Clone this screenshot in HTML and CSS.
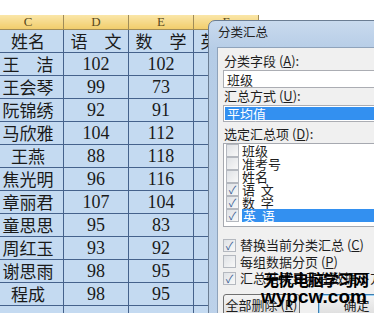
FILE: index.html
```html
<!DOCTYPE html>
<html>
<head>
    <meta charset="utf-8">
    <title>分类汇总</title>
    <link rel="stylesheet" href="styles.css">
</head>
<body>
    <div class="screen">
        <table class="sheet">
            <colgroup>
                <col class="col-c">
                <col class="col">
                <col class="col">
                <col class="col">
            </colgroup>
            <thead>
                <tr>
                    <td>C</td>
                    <td>D</td>
                    <td>E</td>
                    <td>F</td>
                </tr>
            </thead>
            <tbody>
                <tr><td class="name">姓名</td><td class="name">语　文</td><td class="name">数　学</td><td class="name">英　语</td></tr>
                <tr><td class="name">王　洁</td><td>102</td><td>102</td><td></td></tr>
                <tr><td class="name">王会琴</td><td>99</td><td>73</td><td></td></tr>
                <tr><td class="name">阮锦绣</td><td>92</td><td>91</td><td></td></tr>
                <tr><td class="name">马欣雅</td><td>104</td><td>112</td><td></td></tr>
                <tr><td class="name">王燕</td><td>88</td><td>118</td><td></td></tr>
                <tr><td class="name">焦光明</td><td>96</td><td>116</td><td></td></tr>
                <tr><td class="name">章丽君</td><td>107</td><td>104</td><td></td></tr>
                <tr><td class="name">童思思</td><td>95</td><td>83</td><td></td></tr>
                <tr><td class="name">周红玉</td><td>93</td><td>92</td><td></td></tr>
                <tr><td class="name">谢思雨</td><td>98</td><td>95</td><td></td></tr>
                <tr><td class="name">程成</td><td>98</td><td>95</td><td></td></tr>
                <tr><td></td><td></td><td></td><td></td></tr>
            </tbody>
        </table>

        <!-- dialog window over the sheet -->
        <div class="dialog">
            <div class="title">分类汇总</div>
            <div class="panel">
                <div class="lbl">分类字段 (<u>A</u>):</div>
                <div class="field">班级</div>
                <div class="lbl">汇总方式 (<u>U</u>):</div>
                <div class="field select"><span class="picked">平均值</span></div>
                <div class="lbl gap">选定汇总项 (<u>D</u>):</div>
                <div class="listbox">
                    <div class="item"><span class="box"></span><span>班级</span></div>
                    <div class="item"><span class="box"></span><span>准考号</span></div>
                    <div class="item"><span class="box"></span><span>姓名</span></div>
                    <div class="item"><span class="box on">✓</span><span>语&nbsp;&nbsp;文</span></div>
                    <div class="item"><span class="box on">✓</span><span>数&nbsp;&nbsp;学</span></div>
                    <div class="item"><span class="box on">✓</span><span class="sel">英&nbsp;&nbsp;语</span></div>
                </div>
                <div class="checks">
                    <div class="check"><span class="box on">✓</span><span>替换当前分类汇总 (<u>C</u>)</span></div>
                    <div class="check"><span class="box"></span><span>每组数据分页 (<u>P</u>)</span></div>
                    <div class="check"><span class="box on">✓</span><span>汇总结果显示在数据下方</span></div>
                </div>
                <div class="buttons">
                    <div class="btn">全部删除 (<u>R</u>)</div>
                    <div class="btn default">确定</div>
                </div>
            </div>
        </div>

        <div class="mark">
            <div class="mark-cn">无忧电脑学习网</div>
            <div class="mark-en">wypcw.com</div>
        </div>
    </div>
</body>
</html>
```

FILE: styles.css
```css
body {
    margin: 0;
    background: #ffffff;
}

.screen {
    position: relative;
    width: 374px;
    height: 313px;
    overflow: hidden;
    padding-top: 15px;
    box-sizing: border-box;
}

.sheet {
    border-collapse: collapse;
    table-layout: fixed;
    margin-left: -8px;
    width: 266px;
}
.col-c {
    width: 71px;
}
.col {
    width: 65px;
}
.sheet td {
    padding: 0;
    border: 1px solid #45628c;
    text-align: center;
    white-space: nowrap;
    overflow: hidden;
    color: #1a1a1a;
    background: #c4daf1;
    font-family: "Liberation Serif", serif;
    font-size: 18px;
    height: 22px;
    line-height: 22px;
}
.sheet td.name {
    font-family: "Noto Sans CJK SC", sans-serif;
    font-size: 17px;
}
.sheet thead td {
    height: 14px;
    line-height: 14px;
    font-size: 13px;
    color: #5a4a20;
    background: linear-gradient(#fae6a8, #f1cd6c);
    border-color: #a08c58;
    border-top: none;
}

.dialog {
    position: absolute;
    left: 208px;
    top: 20px;
    width: 190px;
    height: 310px;
    background: linear-gradient(#c9daee, #b5cce6 30px, #bdd2ea);
    border: 1px solid #6b7d93;
    border-radius: 7px 0 0 0;
    font-family: "Noto Sans CJK SC", sans-serif;
    font-size: 13px;
    color: #1e1e1e;
}
.title {
    height: 26px;
    line-height: 22px;
    padding-left: 9px;
    font-size: 12.5px;
    color: #222;
}
.panel {
    margin-left: 8px;
    height: 300px;
    background: #f0f0f0;
    border-left: 1px solid #8fa3bb;
    border-top: 1px solid #8fa3bb;
    padding: 5px 0 0 5px;
    display: flex;
    flex-direction: column;
}
.lbl {
    height: 15px;
    line-height: 15px;
    padding-left: 1px;
}
.lbl u, .check u {
    text-decoration: underline;
}
.field {
    margin-top: 2px;
    height: 18px;
    line-height: 17px;
    box-sizing: border-box;
    background: #ffffff;
    border: 1px solid #abadb3;
    padding-left: 3px;
}
.select {
    height: 17px;
    padding: 1px;
    line-height: 13px;
}
.picked {
    display: block;
    height: 13px;
    background: #3390f0;
    color: #ffffff;
    padding-left: 2px;
}
.gap {
    margin-top: 4px;
}
.listbox {
    margin-top: 2px;
    height: 84px;
    box-sizing: border-box;
    background: #ffffff;
    border: 1px solid #a6a9b0;
    padding: 0 0 0 2px;
}
.item {
    display: flex;
    align-items: center;
    gap: 3px;
    height: 13px;
    line-height: 13px;
}
.sel {
    flex: 1;
    background: #3390f0;
    color: #ffffff;
    padding-left: 1px;
}
.box {
    width: 11px;
    height: 11px;
    flex: none;
    border: 1px solid #b4b8bf;
    background: linear-gradient(135deg, #dfe2e6, #f8f8f8);
    font-size: 11px;
    line-height: 11px;
    text-align: center;
    color: #3b5f96;
}
.checks {
    margin-top: 10px;
    display: flex;
    flex-direction: column;
}
.check {
    display: flex;
    align-items: center;
    gap: 4px;
    height: 16.5px;
    line-height: 16px;
    white-space: nowrap;
}
.buttons {
    margin-top: 7px;
    display: flex;
    gap: 18px;
}
.btn {
    width: 77px;
    height: 22px;
    flex: none;
    box-sizing: border-box;
    border: 1px solid #707070;
    border-radius: 3px;
    background: linear-gradient(#f4f4f4, #dedede);
    text-align: center;
    line-height: 20px;
}
.default {
    border-color: #3c7fb1;
    box-shadow: inset 0 0 0 1px #9fd3f5;
}

.mark {
    position: absolute;
    left: 261px;
    top: 270px;
    color: #000000;
    font-weight: bold;
}
.mark-cn {
    font-family: "Noto Sans CJK SC", sans-serif;
    font-size: 16px;
    line-height: 18px;
    padding-left: 2px;
    letter-spacing: -1px;
}
.mark-en {
    font-family: "Liberation Sans", Arial, sans-serif;
    font-size: 19px;
    line-height: 17px;
}
```
